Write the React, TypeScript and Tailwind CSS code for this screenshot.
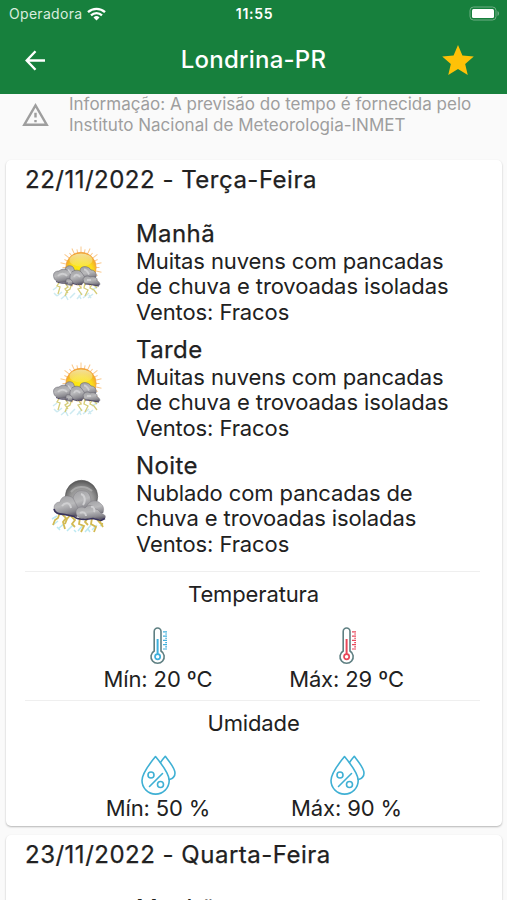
import React from 'react';

type Period = {
  name: string;
  lines: string[];
  night?: boolean;
};

type Day = {
  title: string;
  periods: Period[];
  temperature?: [string, string];
  humidity?: [string, string];
};

const days: Day[] = [
  {
    title: '22/11/2022 - Terça-Feira',
    periods: [
      { name: 'Manhã', lines: ['Muitas nuvens com pancadas', 'de chuva e trovoadas isoladas', 'Ventos: Fracos'] },
      { name: 'Tarde', lines: ['Muitas nuvens com pancadas', 'de chuva e trovoadas isoladas', 'Ventos: Fracos'] },
      { name: 'Noite', lines: ['Nublado com pancadas de', 'chuva e trovoadas isoladas', 'Ventos: Fracos'], night: true },
    ],
    temperature: ['Mín: 20 ºC', 'Máx: 29 ºC'],
    humidity: ['Mín: 50 %', 'Máx: 90 %'],
  },
  {
    title: '23/11/2022 - Quarta-Feira',
    periods: [{ name: 'Manhã', lines: [] }],
  },
];

// Gradients shared by all the weather icons
function IconDefs() {
  return (
    <svg className="absolute" width="0" height="0">
      <defs>
        <radialGradient id="sun" cx="50%" cy="60%" r="60%" fy="75%">
          <stop offset="0" stopColor="#fff600" />
          <stop offset="0.65" stopColor="#fbdc1c" />
          <stop offset="1" stopColor="#f0982a" />
        </radialGradient>
        <linearGradient id="shine" x1="0" y1="0" x2="0" y2="1">
          <stop offset="0" stopColor="#f3e3a0" stopOpacity="0.95" />
          <stop offset="1" stopColor="#f9ea70" stopOpacity="0.4" />
        </linearGradient>
        <linearGradient id="puff" x1="0.3" y1="0" x2="0.6" y2="1">
          <stop offset="0" stopColor="#a3a3a6" />
          <stop offset="0.45" stopColor="#b9b9bb" />
          <stop offset="0.8" stopColor="#8b8a90" />
          <stop offset="1" stopColor="#5a5667" />
        </linearGradient>
        <radialGradient id="dome" cx="50%" cy="62%" r="62%">
          <stop offset="0" stopColor="#c8c8c8" />
          <stop offset="0.6" stopColor="#959595" />
          <stop offset="1" stopColor="#555" />
        </radialGradient>
      </defs>
    </svg>
  );
}

function DayStormIcon() {
  const rays = Array.from({ length: 28 }, (_, i) => (i * 360) / 28);
  return (
    <svg width="80" height="75" viewBox="0 0 80 75" fill="none">
      {rays.map((angle, i) => (
        <path
          key={angle}
          d={i % 2 ? 'M41 18V14' : 'M41 18V11.5'}
          stroke="#fac98c"
          strokeWidth="1"
          transform={`rotate(${angle} 41 32.5)`}
        />
      ))}
      <circle cx="41" cy="32.5" r="15.2" fill="url(#sun)" stroke="#f2a545" strokeWidth="0.8" />
      <ellipse cx="41" cy="25" rx="11.5" ry="6.5" fill="url(#shine)" />
      <path
        d="M13 55l4-3m0 9l5-4m-1 7l6-5m3 4l5-5m2 6l5-6m1 5l6-5m-1 5l5-4m-1-4l5-3M14 58l3 3m9 0l2 4m11-5l2 4m8-4l2 3"
        stroke="#cdeaf1"
        strokeWidth="1.5"
      />
      <path
        d="M20 46l-3 5 3 1-2 7M25 48l3 4-3 2 3 4M32 48l-2 6-3 2-2 5M37 47l4 6-3 1 4 6M45 48l-1 5 4 2-3 6M52 49l-2 4 4 2 3 4M56 47l-1 4 2 2"
        stroke="#d6cd78"
        strokeWidth="1.3"
      />
      <g fill="url(#puff)" stroke="#6c6974" strokeWidth="0.6">
        <path d="M25 35c0-5 8-6 9-1l2 5-5 7-5-3-1-8Z" />
        <path d="M40 35c1-5 9-4 11 0 4 0 6 4 5 7l-6 3-9-2-1-8Z" />
        <path d="M14 43c-1.500-5 1-7 5-7 4-3.500 9-1.500 11 2l3 8-8 1.500c-4 .5-10-1-11-4.500Z" />
        <path d="M30 41c0-6 9-8 12-3l4 6-4 5.500-9-1-3-4v-3.500Z" />
        <path d="M43 44c1-3 5-4 7-2 3-1 8 0 7 4 3.500 1 4 5 0 5l-5-1.500-4-.5-4-1-1-4Z" />
        <path d="M26 44.500c2-2 6 0 7 3l-1 3-6-1v-5Z" />
      </g>
      <path d="M16 46.500c4 2 8 2 12 1.500m4 0c4 2 7 2 10 1m3 0c4 0 8 1 14 2" stroke="#4f4963" strokeWidth="1" />
      <path d="M18 41c2-3 7-3 9 0M28 34.500l3 4M34 42c1-3 4-3 6 0M44 34.500c3 0 4 3 5 5M47 45h4" stroke="#cfcfd1" strokeWidth="1.800" />
    </svg>
  );
}

function NightStormIcon() {
  return (
    <svg width="80" height="75" viewBox="0 2 80 75" fill="none">
      <path
        d="M12 54l5-3m-4 9l5-4m1 7l6-5m2 8l6-6m5 6l5-6m2 7l6-7m1 5l5-5m3 1l3-2M17 62l3 3m14 0l2 2m12-3l2 3"
        stroke="#bce9f2"
        strokeWidth="1.5"
      />
      <path
        d="M20 47l-2 6-3 2-2 5M21 48l5 5-3 4 2 7M31 49l-4 5-2 5M31 51l4 4-3 4 3 3M40 53l-1 6 5 2-3 6M48 53l-3 4 3 3M52 53l-1 6 5 3-2 5M56 53l4 5 3 1M61 52l-1 5 3 5"
        stroke="#d3ba52"
        strokeWidth="1.8"
      />
      <circle cx="41.5" cy="31.5" r="16.2" fill="url(#dome)" stroke="#555" strokeWidth="0.6" />
      <path d="M31 27c5-6 14-7 21-1" stroke="#a8a8a8" strokeWidth="2" />
      <g fill="url(#puff)" stroke="#77757c" strokeWidth="0.4">
        <path d="M33 37c-1-8 5-13 11-11 5 0 7 6 7 11l-2 8-13 3-3-11Z" />
        <path d="M47 41c2-6 10-7 14-2 3 2 3 6 2 9l-12 3-4-10Z" />
        <path d="M14 43c0-5 4-6 6-6 1-6 8-8 13-4l6 12-2 7-12-2c-7 0-12-2-11-7Z" />
        <path d="M36 47c0-5 6-6 9-4 3-4 9-3 10 1 4 0 5 4 7 5 4 0 5 5 0 6l-10-2-9 1c-5-1-7-4-7-7Z" />
      </g>
      <path d="M14 44c1 5 6 5 11 5.500l9 2c3 3 7 3 11 3l8-1 8 2 4-2" stroke="#38335c" strokeWidth="1.6" />
      <path d="M22 41c3-4 8-4 9 2M41 29c4 1 5 7 2 11M40 48c3-2 6 0 6 3M51 42c3-1 4 3 3 5" stroke="#d0d0d2" strokeWidth="2" />
    </svg>
  );
}

function ThermometerIcon({ color }: { color: string }) {
  return (
    <svg className="ml-[2px]" width="24" height="40" viewBox="0 0 24 40" fill="none">
      <path d="M7.2 25V5.4a3.4 3.4 0 0 1 6.8 0V25a6.6 6.6 0 1 1-6.8 0Z" stroke="#5e7f82" strokeWidth="1.6" />
      <circle cx="10.6" cy="30.7" r="2.6" stroke={color} strokeWidth="1.7" />
      <path d="M10.6 13v15" stroke={color} strokeWidth="2" />
      <path d="M16 5.800h4M16 10.100h4M16 14.400h4M16 18.700h4M16 23h4" stroke={color} strokeWidth="1.2" />
      <path d="M18.200 8H20M18.200 12.300H20M18.200 16.600H20M18.200 20.900H20" stroke={color} strokeWidth="1.1" />
    </svg>
  );
}

function HumidityIcon() {
  return (
    <svg width="36" height="42" viewBox="0 0 36 42" fill="none" stroke="#3fb0d4" strokeWidth="1.6" strokeLinejoin="round" strokeLinecap="round">
      <path d="M15.500 2.500C11 8 2 19 2 26.500a13.600 13.600 0 0 0 27.200 0C29.200 19 20 8 15.500 2.500Z" />
      <path d="M20.500 8.500c1.600-2.400 3.400-4.600 4.800-6.200C28.500 6.500 35 14 35 19c0 3-2 5.500-5.600 6.600" />
      <path d="M22.500 19.500 9.500 32.500" />
      <circle cx="11" cy="21" r="3" />
      <circle cx="20.500" cy="30.500" r="3" />
    </svg>
  );
}

function PeriodRow({ period }: { period: Period }) {
  return (
    <div className="flex h-[116px] pl-[34px]">
      <div className="w-20 shrink-0 pt-4">{period.night ? <NightStormIcon /> : <DayStormIcon />}</div>
      <div className="pl-[16px] whitespace-nowrap">
        <h3 className="h-[29.600px] text-[24px] leading-[29px] tracking-[0.4px] [-webkit-text-stroke:0.25px_#212121]">{period.name}</h3>
        {period.lines.map((line) => (
          <p key={line} className="text-[22px] leading-[25.700px] tracking-[-0.1px]">{line}</p>
        ))}
      </div>
    </div>
  );
}

type MetricProps = {
  title: string;
  values: [string, string];
  minIcon: React.ReactNode;
  maxIcon: React.ReactNode;
};

function Metric({ title, values, minIcon, maxIcon }: MetricProps) {
  return (
    <section className="ml-[19px] mr-[22px] h-[129px] border-t border-[#efefef] pt-[8px] text-[22px] leading-[28px] tracking-[-0.13px]">
      <h4 className="pl-[2px] text-center">{title}</h4>
      <div className="flex justify-center pt-[19px] whitespace-nowrap">
        <div className="flex w-[188px] flex-col items-center">
          <div className="flex h-[37.500px] items-center">{minIcon}</div>
          <p>{values[0]}</p>
        </div>
        <div className="flex w-[189px] flex-col items-center">
          <div className="flex h-[37.500px] items-center">{maxIcon}</div>
          <p>{values[1]}</p>
        </div>
      </div>
    </section>
  );
}

function DayCard({ day }: { day: Day }) {
  return (
    <article className="h-[666px] shrink-0 rounded-[5px] bg-white shadow-[0_1px_2px_rgba(0,0,0,0.28)]">
      <h2 className="h-[59px] pl-[19px] pt-[5px] text-[24px] leading-[30px] tracking-[0.5px] whitespace-nowrap [-webkit-text-stroke:0.25px_#212121]">
        {day.title}
      </h2>
      {day.periods.map((period) => (
        <PeriodRow key={period.name} period={period} />
      ))}
      <div className="h-[4px]" />
      {day.temperature && (
        <Metric
          title="Temperatura"
          values={day.temperature}
          minIcon={<ThermometerIcon color="#3fb0dc" />}
          maxIcon={<ThermometerIcon color="#e8475a" />}
        />
      )}
      {day.humidity && (
        <Metric title="Umidade" values={day.humidity} minIcon={<HumidityIcon />} maxIcon={<HumidityIcon />} />
      )}
    </article>
  );
}

export default function App() {
  return (
    <div className="flex h-[900px] w-[507px] flex-col overflow-hidden bg-[#fafafa] font-['Inter',sans-serif] text-[#212121]">
      <IconDefs />
      <header className="h-[94px] shrink-0 bg-[#17803d] text-white">
        {/* Status bar */}
        <div className="grid h-[27px] grid-cols-3 items-center pl-[9px] pr-[7px] text-[14px] leading-[27px]">
          <div className="flex items-center gap-[5px] text-[#d9eddf]">
            <span className="tracking-[0.3px]">Operadora</span>
            <svg width="19" height="14" viewBox="0 0 19 14" fill="none" stroke="#fff" strokeWidth="2.300">
              <path d="M1 5.200a12.300 12.300 0 0 1 17 0M4 8.300a8 8 0 0 1 11 0" />
              <path d="M6.500 10.500a4.400 4.400 0 0 1 6 0l-3 3Z" fill="#fff" stroke="none" />
            </svg>
          </div>
          <span className="text-center font-semibold tracking-[0.7px]">11:55</span>
          <svg className="justify-self-end" width="31" height="15" viewBox="0 0 31 15" fill="none">
            <rect x="1" y="1" width="26" height="13" rx="3.500" stroke="#6fae85" />
            <rect x="3" y="3" width="22" height="9" rx="1.500" fill="#fff" />
            <path d="M28.500 5v5c2-.8 2-4.200 0-5Z" fill="#6fae85" />
          </svg>
        </div>
        {/* App bar */}
        <div className="grid h-[66px] grid-cols-[1fr_auto_1fr] items-center pl-[25px] pr-[25px]">
          <svg width="21" height="21" viewBox="0 0 21 21" fill="none" stroke="#fff" strokeWidth="2.400">
            <path d="M20 10.500H2M10.500 1.200 1.700 10.500l8.800 9.300" />
          </svg>
          <h1 className="text-[24px] leading-[30px] tracking-[0.2px] font-medium">Londrina-PR</h1>
          <svg className="mr-[8px] justify-self-end" width="32" height="30" viewBox="2 2 20 19" fill="#ffc107">
            <path d="M12 17.270 18.180 21l-1.640-7.030L22 9.240l-7.190-.61L12 2 9.190 8.630 2 9.240l5.460 4.730L5.820 21Z" />
          </svg>
        </div>
      </header>

      <div className="flex h-[66px] shrink-0 pl-[22px] text-[#9e9e9e]">
        <svg className="mt-[9px]" width="27" height="23" viewBox="1 2 22 19" fill="currentColor">
          <path d="M12 5.990 19.530 19H4.470L12 5.990M12 2 1 21h22L12 2Zm1 14h-2v2h2v-2Zm0-6h-2v4h2v-4Z" />
        </svg>
        <p className="pl-[20px] text-[17px] leading-[21px] whitespace-nowrap">
          Informação: A previsão do tempo é fornecida pelo
          <br />
          Instituto Nacional de Meteorologia-INMET
        </p>
      </div>

      <main className="flex flex-col gap-[9px] pl-[6px] pr-[5px]">
        {days.map((day) => (
          <DayCard key={day.title} day={day} />
        ))}
      </main>
    </div>
  );
}
